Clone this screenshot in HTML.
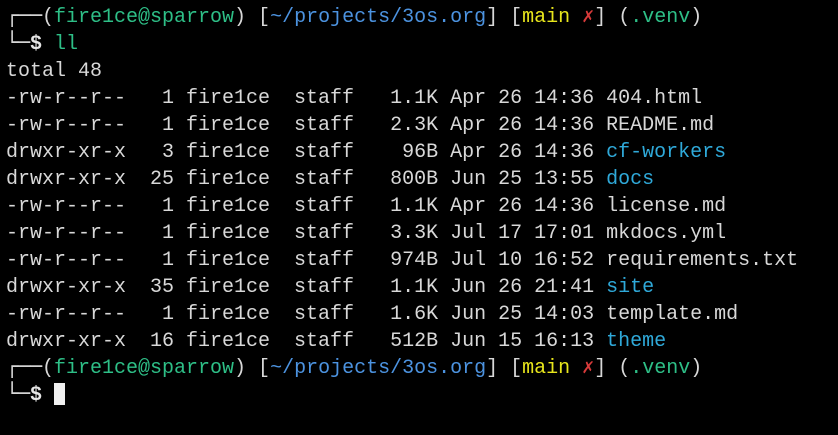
<!DOCTYPE html>
<html><head><meta charset="utf-8"><style>
html,body{margin:0;padding:0;background:#000;width:838px;height:435px;overflow:hidden}
.t{padding:4px 0 0 6px;font-family:"Liberation Mono","DejaVu Sans Mono",monospace;font-size:20px;color:#d8d8d8}
.t div{height:27px;line-height:27px;overflow:visible;white-space:pre}
.g{color:#2ebf87}.b{color:#4c93e0}.y{color:#e8e61c}.r{color:#d83a3a}.c{color:#2fa9d9}.w{color:#e6e6e6}
.bx{font-family:"DejaVu Sans Mono",monospace;display:inline-block;width:12px;line-height:0;color:#d8d8d8}
.cur{display:inline-block;width:11px;height:22px;background:#f0f0f0;vertical-align:-5px}
</style></head><body><div class="t">
<div><span class="bx">┌</span><span class="bx">─</span><span class="bx">─</span>(<span class="g">fire1ce@sparrow</span>) [<span class="b">~/projects/3os.org</span>] [<span class="y">main</span> <span class="r">✗</span>] (<span class="g">.venv</span>)</div>
<div><span class="bx">└</span><span class="bx">─</span><span class="w"><b>$</b></span> <span class="g">ll</span></div>
<div>total 48</div>
<div>-rw-r--r--   1 fire1ce  staff   1.1K Apr 26 14:36 404.html</div>
<div>-rw-r--r--   1 fire1ce  staff   2.3K Apr 26 14:36 README.md</div>
<div>drwxr-xr-x   3 fire1ce  staff    96B Apr 26 14:36 <span class="c">cf-workers</span></div>
<div>drwxr-xr-x  25 fire1ce  staff   800B Jun 25 13:55 <span class="c">docs</span></div>
<div>-rw-r--r--   1 fire1ce  staff   1.1K Apr 26 14:36 license.md</div>
<div>-rw-r--r--   1 fire1ce  staff   3.3K Jul 17 17:01 mkdocs.yml</div>
<div>-rw-r--r--   1 fire1ce  staff   974B Jul 10 16:52 requirements.txt</div>
<div>drwxr-xr-x  35 fire1ce  staff   1.1K Jun 26 21:41 <span class="c">site</span></div>
<div>-rw-r--r--   1 fire1ce  staff   1.6K Jun 25 14:03 template.md</div>
<div>drwxr-xr-x  16 fire1ce  staff   512B Jun 15 16:13 <span class="c">theme</span></div>
<div><span class="bx">┌</span><span class="bx">─</span><span class="bx">─</span>(<span class="g">fire1ce@sparrow</span>) [<span class="b">~/projects/3os.org</span>] [<span class="y">main</span> <span class="r">✗</span>] (<span class="g">.venv</span>)</div>
<div><span class="bx">└</span><span class="bx">─</span><span class="w"><b>$</b></span> <span class="cur"></span></div>
</div></body></html>
